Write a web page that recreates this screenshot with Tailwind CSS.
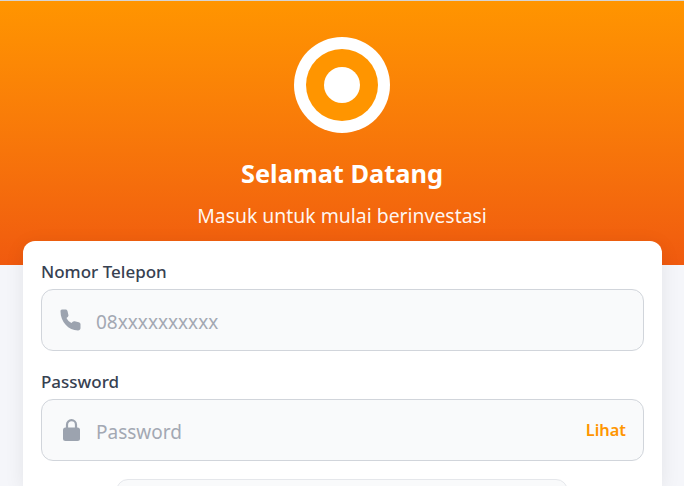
<!DOCTYPE html>
<html lang="en">
<head>
    <meta charset="UTF-8">
    <meta name="viewport" content="width=device-width, initial-scale=1.0">
    <title>Masuk</title>
    <script src="https://cdn.jsdelivr.net/npm/@tailwindcss/browser@4"></script>
</head>
<body class="bg-[#f5f6fa] h-[486px] overflow-hidden font-['Noto_Sans',sans-serif]">
<!-- Header -->
<div class="h-[265px] border-t border-[#d4d4d4] bg-gradient-to-b from-[#ff9500] to-[#f05a0f] flex flex-col items-center pt-9">
    <div class="w-24 h-24 rounded-full bg-white flex items-center justify-center">
        <div class="w-[72px] h-[72px] rounded-full bg-[#ff9500] flex items-center justify-center">
            <div class="w-9 h-9 rounded-full bg-white"></div>
        </div>
    </div>
    <h1 class="mt-[23px] text-[25.4px] leading-[34px] font-bold text-white">Selamat Datang</h1>
    <p class="mt-[13px] text-[19.4px] leading-[26px] text-white/95">Masuk untuk mulai berinvestasi</p>
</div>

<!-- Login card -->
<div class="ml-[23px] w-[639px] -mt-6 bg-white rounded-t-xl shadow-[0_4px_20px_rgba(0,0,0,0.08)] h-[245px] overflow-hidden px-[18px] pt-[18px]">
    <label class="block text-[17px] leading-[26px] font-medium text-[#374151]">Nomor Telepon</label>
    <div class="mt-[4px] h-[62px] rounded-xl border border-[#d1d5db] bg-[#f9fafb] flex items-center px-[18px]">
        <svg class="w-[22px] h-[22px] text-[#9ca3af]" viewBox="0 0 22 22" fill="currentColor"><path d="M2 .5h3.500c1 0 1.800.6 2 1.500l.9 4c.2.800-.1 1.500-.7 2l-1.200 1.100c1 2.200 2.800 4 5 5l1.200-1.300c.5-.6 1.200-.8 2-.6l4 1c1 .3 1.800 1 1.800 2V19c0 1.500-1 2.500-2.500 2.500C8.500 21.500.5 13 .5 2.300.5 1.200 1 .5 2 .5z"/></svg>
        <span class="ml-[14px] pt-[5px] text-[19px] text-[#a3a8b3]">08xxxxxxxxxx</span>
    </div>

    <label class="block mt-[18px] text-[17px] leading-[26px] font-medium text-[#374151]">Password</label>
    <div class="mt-[4px] h-[62px] rounded-xl border border-[#d1d5db] bg-[#f9fafb] flex items-center pl-[18px] pr-[17px]">
        <span class="w-[22px] flex justify-center">
            <svg class="w-[17px] h-[22px] text-[#9ca3af]" viewBox="0 0 17 22" fill="currentColor"><rect x="0" y="8.500" width="17" height="13.500" rx="2.500"/><path d="M4 10V5.700a4.500 4.500 0 0 1 9 0V10" fill="none" stroke="currentColor" stroke-width="2.200"/></svg>
        </span>
        <span class="ml-[14px] pt-[5px] text-[19px] text-[#a3a8b3]">Password</span>
        <span class="ml-auto text-[16.4px] font-semibold text-[#ff9500]">Lihat</span>
    </div>

    <div class="mt-[18px] ml-[75px] w-[452px] h-12 rounded-xl border border-[#e5e7eb] bg-[#f9fafb]"></div>
</div>
</body>
</html>
